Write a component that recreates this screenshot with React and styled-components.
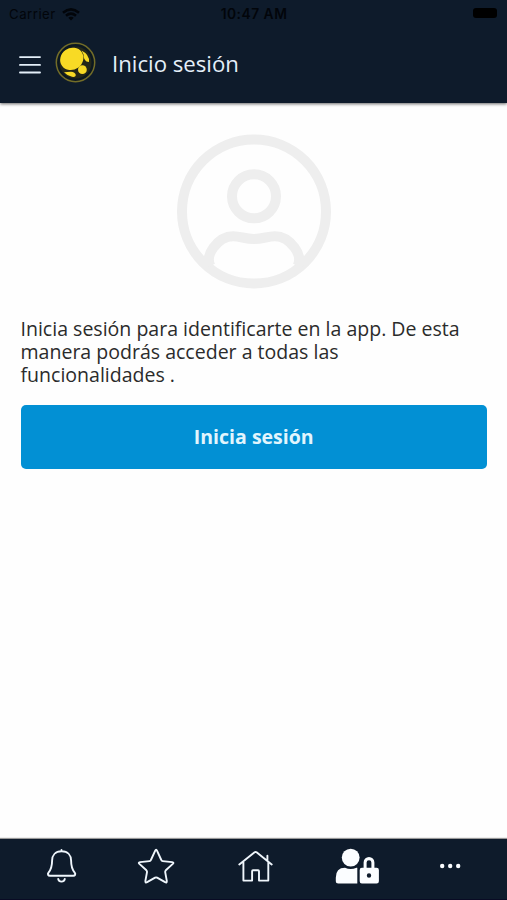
import React from "react";
import styled, { createGlobalStyle } from "styled-components";

const Global = createGlobalStyle`
  * { box-sizing: border-box; }
  html, body { margin: 0; padding: 0; background: #fff; }
  body { font-family: "Open Sans", "Noto Sans", sans-serif; }
  button { border: 0; padding: 0; background: none; font: inherit; color: inherit; }
  svg { display: block; }
`;

const Screen = styled.div`
  width: 507px;
  height: 900px;
  display: flex;
  flex-direction: column;
  overflow: hidden;
  background: #fefefe;
`;

const Header = styled.header`
  flex: none;
  height: 103px;
  background: #0e1b2b;
  box-shadow: 0 1px 3px rgba(0, 0, 0, 0.6);
`;

const StatusBar = styled.div`
  height: 28px;
  display: grid;
  grid-template-columns: 1fr auto 1fr;
  align-items: center;
  padding: 0 10px 0 9px;
  font: 13.2px/28px Inter, sans-serif;
  color: #02050a;
`;

const Carrier = styled.span`
  display: flex;
  align-items: center;
  gap: 6px;
  letter-spacing: 0.5px;
`;

const Clock = styled.span`
  font-weight: 600;
  font-size: 13.8px;
  letter-spacing: 0.5px;
  margin-left: 2px;
`;

const Battery = styled.i`
  justify-self: end;
  width: 24px;
  height: 10px;
  border-radius: 3px;
  background: #000;
  margin-top: -2px;
`;

const Toolbar = styled.div`
  height: 72px;
  display: flex;
  align-items: center;
  padding: 0 19px;
`;

const Menu = styled.button`
  width: 22px;
  height: 18px;
  margin-top: 2px;
`;

const Logo = styled.svg`
  margin: -4px 16px 0 14px;
`;

const Title = styled.h1`
  margin: 0;
  font-size: 22.2px;
  line-height: 30px;
  font-weight: 400;
  color: #e4eff9;
`;

const Content = styled.main`
  flex: 1;
  display: flex;
  flex-direction: column;
  padding: 31px 20px 0 20.5px;
`;

const Avatar = styled.svg`
  align-self: center;
`;

const Message = styled.p`
  margin: 27px 0 18.5px;
  font-size: 19.54px;
  line-height: 23.2px;
  color: #2b2b2b;
`;

const LoginButton = styled.button`
  && {
    height: 63.5px;
    border-radius: 5px;
    background: #0290d4;
    color: #e2f5fd;
    font-size: 19.5px;
    font-weight: 700;
  }
`;

const TabBar = styled.nav`
  flex: none;
  height: 61px;
  display: grid;
  grid-template-columns: repeat(5, 97px);
  padding: 5px 9px 0 13px;
  background: #0e1b2b;
  border-bottom: 1px solid #090b24;
  box-shadow: 0 -1px 1px rgba(0, 0, 0, 0.4);
`;

const Tab = styled.button`
  height: 44px;
  display: flex;
  justify-content: center;
`;

const TabGlyph = styled.svg`
  fill: ${(p) => (p.$solid ? "#fbfdff" : "none")};
  stroke: ${(p) => (p.$solid ? "none" : "#eff6fc")};
  stroke-width: 1.9;
  stroke-linecap: round;
  stroke-linejoin: round;
`;

const tabs = [
  {
    label: "Notificaciones",
    x: 31,
    art: (
      <>
        <path d="M61.5 850v1.3M61.5 851.3c-6.3 0-9.4 4.2-9.4 9.2 0 6.6-1 9-3.6 12.1-1.2 1.5-.4 3.2 1.4 3.2h23.4c1.8 0 2.6-1.7 1.4-3.2-2.6-3.1-3.6-5.5-3.6-12.1 0-5-3.1-9.2-9.4-9.2Z" />
        <path d="M58.2 879a3.4 3.4 0 0 0 6.6 0" />
      </>
    ),
  },
  {
    label: "Favoritos",
    x: 128,
    art: (
      <path d="M155.1 850.8q1-2.2 2 0l4.2 9.2q.4 1 1.4 1.1l9.5 1q2.1.3.6 1.8l-7 6.4q-.8.8-.6 1.8l1.6 8.8q.2 2.3-1.7 1.3l-8-4.5q-1-.5-2 0l-8 4.5q-1.9 1-1.7-1.3l1.6-8.8q.2-1-.6-1.8l-7-6.4q-1.5-1.5.6-1.8l9.5-1q1-.1 1.4-1.1Z" />
    ),
  },
  {
    label: "Inicio",
    x: 225,
    art: (
      <path d="M239.3 864.5l15.3-12.2q1-.8 2 0l15.1 12.2M243.4 862v18.6h8.7v-9.4q0-.9.9-.9h5.1q.9 0 .9.9v9.4h9.3V862M267.4 855.8v5" />
    ),
  },
  {
    label: "Acceso",
    x: 322,
    solid: true,
    art: (
      <>
        <circle cx="350.7" cy="857.6" r="8.9" />
        <path d="M345 867.8q5.5 2.5 11.5 0h.8v15.7h-19q-2.5 0-2.5-2.5v-3.3q0-9.9 9.2-9.9Z" />
        <path d="M363.6 867.8v-5.4a5.4 5.4 0 0 1 10.8 0v5.4h2.2q2.3 0 2.3 2.3v11.1q0 2.3-2.3 2.3h-14.7q-2.2 0-2.2-2.3v-11.1q0-2.3 2.2-2.3Zm3 0h4.8v-5.2a2.4 2.4 0 0 0-4.8 0ZM369 873.3a2.2 2.2 0 1 0 0 4.4 2.2 2.2 0 0 0 0-4.4Z" fillRule="evenodd" />
      </>
    ),
  },
  {
    label: "Más",
    x: 419,
    solid: true,
    art: (
      <>
        <circle cx="442.2" cy="866" r="2.2" />
        <circle cx="450.2" cy="866" r="2.2" />
        <circle cx="458.2" cy="866" r="2.2" />
      </>
    ),
  },
];

export default function App() {
  return (
    <Screen>
      <Global />
      <Header>
        <StatusBar>
          <Carrier>
            Carrier
            <svg width="18" height="13" viewBox="0 0 18 13" fill="none" stroke="currentColor" strokeWidth="2.6">
              <path d="M1 4.7Q9-2 17 4.7M4 7.8q5-4.2 10 0" />
              <path d="M9 12.5 6.3 9.7q2.7-2 5.4 0Z" fill="currentColor" stroke="none" />
            </svg>
          </Carrier>
          <Clock>10:47 AM</Clock>
          <Battery />
        </StatusBar>
        <Toolbar>
          <Menu aria-label="Menú">
            <svg width="22" height="18" viewBox="0 0 22 18" stroke="#e4eff9" strokeWidth="1.9" strokeLinecap="round">
              <path d="M1 1.1h20M1 8.9h20M1 16.5h20" />
            </svg>
          </Menu>
          <Logo width="41" height="41" viewBox="0 0 41 41">
            <circle cx="20.5" cy="20.5" r="19.2" fill="#0c1820" stroke="#736d28" strokeWidth="1.5" />
            <circle cx="20.5" cy="20.5" r="16" fill="#252818" />
            <ellipse cx="16.8" cy="16.9" rx="12" ry="10.8" transform="rotate(-35 16.8 16.9)" fill="#f8da25" />
            <path d="M26.5 8.5q8.2 4.2 7.5 11.5l-2.5-.5q-3-2-3-7Z" fill="#f8da25" />
            <circle cx="27.4" cy="27.7" r="4.4" fill="#f8da25" />
            <path d="M9 30.3q5.5-.6 8.8-.4 3.6 1.5 2.8 4-1.2 1.4-3.6.9-5-1.2-8-4.5Z" fill="#f8da25" />
          </Logo>
          <Title>Inicio sesión</Title>
        </Toolbar>
      </Header>
      <Content>
        <Avatar width="156" height="156" viewBox="0 0 156 156" fill="none" stroke="#eee" strokeWidth="10">
          <circle cx="78" cy="77.5" r="72" />
          <circle cx="78" cy="62.3" r="22" />
          <path d="M34.5 132q-4.5-8.500 3-18.500 8.500-11.500 20-11.300c7 .2 12 2.800 20.500 2.800s13.500-2.600 20.500-2.800q11.500-.2 20 11.300 7.500 10 3 18.500" />
        </Avatar>
        <Message>
          Inicia sesión para identificarte en la app. De esta manera podrás acceder a todas las
          funcionalidades .
        </Message>
        <LoginButton>Inicia sesión</LoginButton>
      </Content>
      <TabBar>
        {tabs.map((t) => (
          <Tab key={t.label} aria-label={t.label}>
            <TabGlyph $solid={t.solid} width="61" height="44" viewBox={`${t.x} 844 61 44`}>
              {t.art}
            </TabGlyph>
          </Tab>
        ))}
      </TabBar>
    </Screen>
  );
}
